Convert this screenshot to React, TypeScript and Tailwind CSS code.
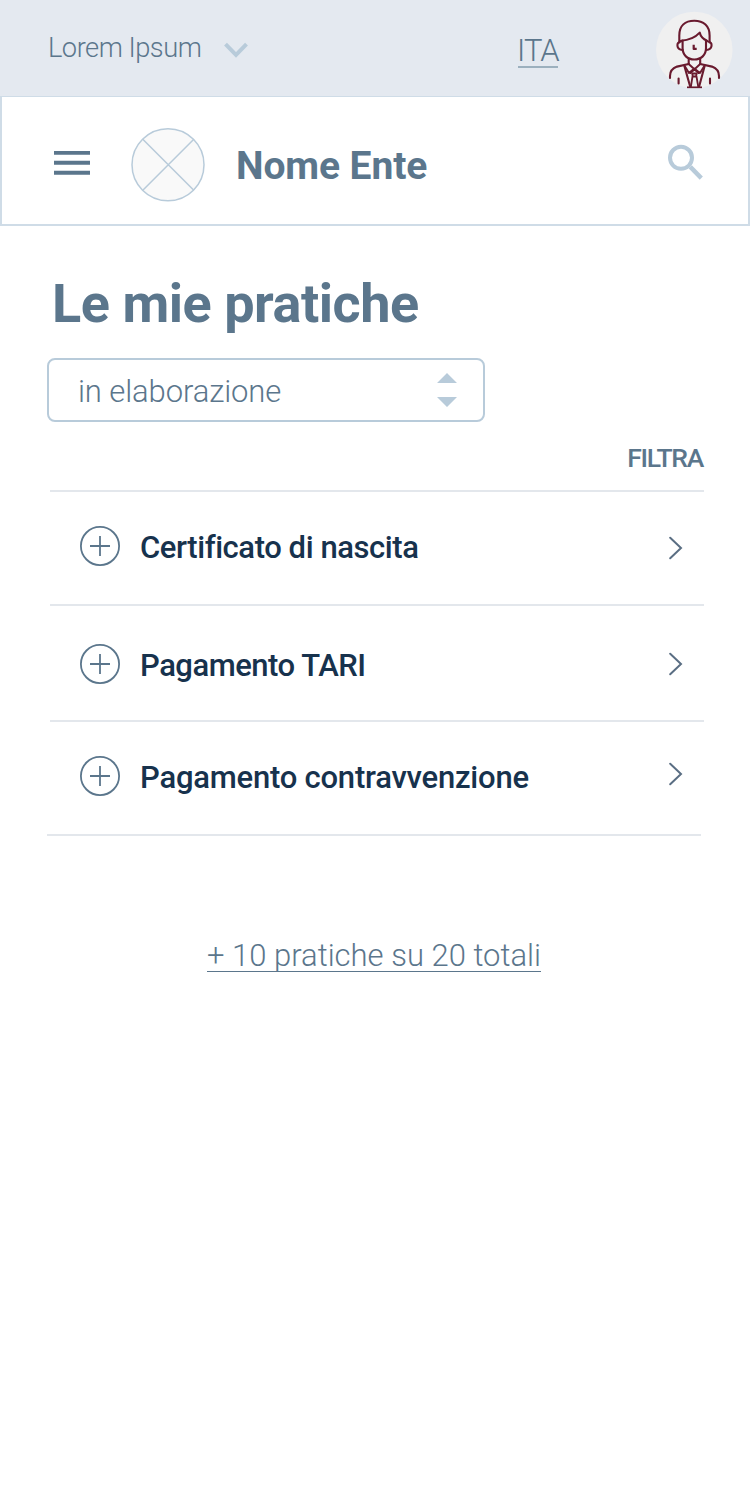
interface Practice {
  title: string;
  row: string;
  icon: string;
  tracking: string;
  arrow: string;
}

const practices: Practice[] = [
  {
    title: 'Certificato di nascita',
    row: 'h-[114px] pt-[34px]',
    icon: 'ml-[30px]',
    tracking: 'tracking-[-0.43px]',
    arrow: 'mt-[10px] mr-[21px]',
  },
  {
    title: 'Pagamento TARI',
    row: 'h-[116px] pt-[38px]',
    icon: 'ml-[30px]',
    tracking: 'tracking-[-0.48px]',
    arrow: 'mt-[8px] mr-[21px]',
  },
  {
    title: 'Pagamento contravvenzione',
    row: '-ml-[3px] mr-[3px] h-[114px] pt-[34px]',
    icon: 'ml-[33px]',
    tracking: 'tracking-[-0.22px]',
    arrow: 'mt-[6px] mr-[18px]',
  },
];

function Avatar() {
  return (
    <svg className="h-[90px] w-[90px]" viewBox="0 0 90 90" fill="none">
      <circle cx="44.3" cy="45" r="38.3" fill="#f0f0f0" />
      <g stroke="#691a2e" strokeWidth="2.1" strokeLinecap="round" strokeLinejoin="round">
        <path d="M29.3 37.5V30.5C29.3 21 35 15.800 44.3 15.800S59.6 21 59.6 30.5v7" />
        <path d="M31 35.7c8-.5 14.500-3.500 18.700-8.100.8 3.600 3.300 6.600 7.300 8.100" />
        <path d="M32.600 35.500V43c0 7 4.800 11.500 11.700 11.500S56 50 56 43v-7.500" />
        <path d="M31 36.500c-5 .8-5 7.800 1.600 8.500M58 36.500c5 .8 5 7.800-1.800 8.500" />
        <path d="M43.700 39.800v4.100h3" strokeLinecap="butt" strokeWidth="2.200" />
        <path d="M38.700 54.500v4.500M50.200 54.500v4.500" />
        <path d="M20 73v-2c0-4.800 2.600-7.700 7-9.400L38.700 59M69 73v-2c0-4.800-2.600-7.700-7-9.400L50.200 59" />
        <path d="M34.300 60.800 40.300 82M54.700 60.800 49 82" />
        <path d="M38.700 59 48.500 68M50.200 59 40.500 68M35 61.500l4 6.500 5.300-4.500 5.700 4.500 4-6.500" strokeWidth="1.900" />
        <path d="M42.200 68.500h4.500l-.7 3h-3.200ZM42.500 71.500l-1.600 10M46.500 71.500l1.700 10" strokeWidth="1.800" />
        <path d="M28.600 73.500v5M60 73.500v5" />
        <path d="M37 82.300h15" strokeLinecap="butt" strokeWidth="1.700" />
      </g>
    </svg>
  );
}

function PlusCircle() {
  return (
    <svg className="h-[40px] w-[40px] shrink-0" viewBox="0 0 40 40" fill="none" stroke="#5b768c">
      <circle cx="20" cy="20" r="19.100" strokeWidth="1.800" />
      <path d="M10 20h20M20 10v20" strokeWidth="1.800" />
    </svg>
  );
}

export default function App() {
  return (
    <div className="min-h-[1496px] w-[750px] bg-white font-['Roboto',sans-serif] text-[#5b768c]">
      <div className="flex h-[96px] items-start bg-[#e4e9f0] pl-[48px]">
        <button className="mt-[32px] flex w-[176px] text-[27.25px] leading-[32px] font-[350] tracking-[-0.5px] whitespace-nowrap">
          Lorem Ipsum
        </button>
        <svg className="mt-[42px] h-[17px] w-[24px]" viewBox="0 0 24 17" fill="none" stroke="#b8cbda" strokeWidth="4">
          <path d="M1.500 2.200 12 12.800 22.500 2.200" />
        </svg>
        <a className="mt-[33px] ml-[270px] flex flex-col text-[31px] leading-[36px] font-[350] tracking-[-0.9px]">
          <span className="-ml-[1px]">ITA</span>
          <span className="-mt-[3px] h-[2px] w-[40px] bg-[#9cb0be]" />
        </a>
        <div className="mt-[5px] mr-[10px] ml-auto">
          <Avatar />
        </div>
      </div>

      <header className="flex h-[130px] items-start border-x-2 border-t border-b-2 border-[#cfdce7] bg-white">
        <svg className="mt-[54px] ml-[52px] h-[25px] w-[36px]" viewBox="0 0 36 25" fill="#5b768c">
          <path d="M0 0h36v3.800H0zM0 9.800h36v4H0zM0 19.800h36v4H0z" />
        </svg>
        <svg className="mt-[31px] ml-[41px] h-[74px] w-[74px]" viewBox="0 0 74 74" fill="none" stroke="#b8cbda" strokeWidth="1.500">
          <circle cx="37" cy="36.800" r="36" fill="#f9f9f9" />
          <path d="M11.800 11.200 62.800 62.200M62.800 11.200 11.800 62.200" />
        </svg>
        <h2 className="mt-[46px] ml-[31px] text-[39px] leading-[46px] font-bold tracking-[-0.1px]">Nome Ente</h2>
        <svg className="mt-[47px] mr-[44px] ml-auto h-[38px] w-[38px]" viewBox="0 0 38 38" fill="none" stroke="#b8cbda" strokeWidth="4">
          <circle cx="15" cy="13.800" r="11" />
          <path d="m24.300 22.900 11 11.200" strokeWidth="4.400" />
        </svg>
      </header>

      <main className="px-[47px]">
        <h1 className="pt-[46px] pl-[5px] text-[54px] leading-[64px] font-bold tracking-[-0.47px]">Le mie pratiche</h1>

        <button className="mt-[22px] flex h-[64px] w-[438px] items-center justify-between rounded-[8px] border-2 border-[#b8cbda] pr-[26px] pl-[29px] text-[31px] leading-[36px] font-[350]">
          <span className="pt-[3px] tracking-[-0.1px]">in elaborazione</span>
          <svg className="h-[34px] w-[20px]" viewBox="0 0 20 34" fill="#b8cbda">
            <path d="M10 0 20 10H0zM10 34 0 24h20z" />
          </svg>
        </button>

        <div className="flex h-[68px] justify-end pt-[20px]">
          <button className="flex text-[26.5px] leading-[32px] font-medium tracking-[-1.300px] whitespace-nowrap">FILTRA</button>
        </div>

        <ul className="ml-[3px] w-[654px] border-t-2 border-[#e3e7ec]">
          {practices.map((p) => (
            <li key={p.title} className={`flex items-start border-b-2 border-[#e3e7ec] ${p.row}`}>
              <div className={p.icon}>
                <PlusCircle />
              </div>
              <span
                className={`mt-[4px] ml-[20px] text-[31px] leading-[36px] font-medium whitespace-nowrap text-[#17324d] ${p.tracking}`}
              >
                {p.title}
              </span>
              <svg
                className={`ml-auto h-[24px] w-[14px] ${p.arrow}`}
                viewBox="0 0 14 24"
                fill="none"
                stroke="#5a6e83"
                strokeWidth="2"
                strokeLinecap="round"
              >
                <path d="M1.200 1.800 12 12 1.200 22.200" />
              </svg>
            </li>
          ))}
        </ul>

        <div className="flex pt-[102px] pl-[160px]">
          <a className="flex h-[34px] w-[334px] border-b border-[#5b768c] text-[31px] leading-[36px] font-[350] whitespace-nowrap">
            + 10 pratiche su 20 totali
          </a>
        </div>
      </main>
    </div>
  );
}
